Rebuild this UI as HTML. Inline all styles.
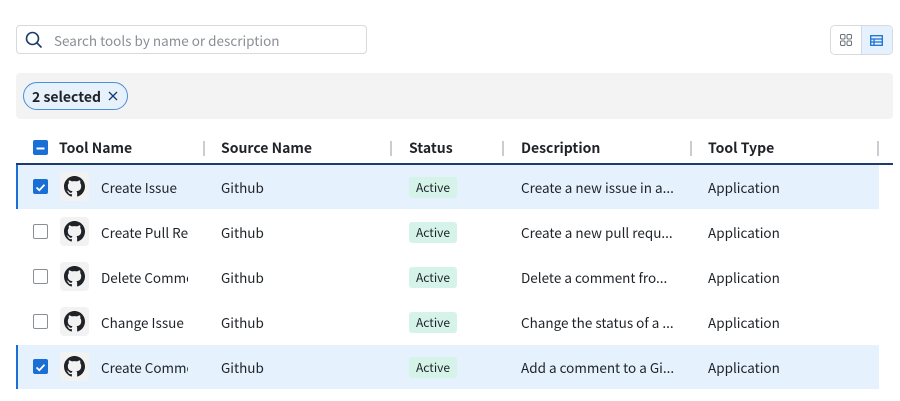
<!DOCTYPE html>
<html><head><meta charset="utf-8"><style>
*{box-sizing:border-box;margin:0;padding:0}
body{width:900px;height:401px;background:#fff;font-family:"Noto Sans CJK JP","Liberation Sans",sans-serif;color:#1f2328;position:relative;overflow:hidden;font-size:13.5px}
.abs{position:absolute}
.search{left:16px;top:25px;width:351px;height:29px;border:1px solid #d6d9dd;border-radius:4px}
.search span{position:absolute;left:37px;top:4px;color:#8a8f96;font-size:13.5px}
.toggle{left:830px;top:25px;width:63px;height:30px;border:1px solid #d6d9dd;border-radius:5px;overflow:hidden;display:flex}
.toggle div{width:31px;height:100%;display:flex;align-items:center;justify-content:center}
.bar{left:16px;top:73px;width:877px;height:46px;background:#f3f3f3;border-radius:4px}
.chip{left:23px;top:82px;width:105px;height:28px;border:1px solid #4a90d9;border-radius:14px;background:#e6f1fc;font-weight:600;font-size:14px;padding:4px 0 0 8px;color:#1f2328}
.th{top:138px;font-weight:600;font-size:14px}
.sep{top:141px;width:2px;height:15px;background:#c9ccd0}
.hline{left:16px;top:163px;width:877px;height:2px;background:#1d3c6b}
.row{left:16px;width:863px;height:44px}
.sel{background:#e5f1fd;border-left:2px solid #1a6fd6}
.cb{width:15px;height:15px;border-radius:2px}
.cb.off{border:1.5px solid #8a8f96;background:#fff}
.cb.on{background:#1a6fd6}
.ic{width:29px;height:29px;background:#f2f2f2;border-radius:4px;display:flex;align-items:center;justify-content:center}
.txt{font-size:13.5px;white-space:nowrap;overflow:hidden}
.badge{width:48px;height:21px;background:#d5f3e8;border-radius:3px;font-size:12px;text-align:center;line-height:21px;color:#1f2328}
</style></head><body>
<div class="abs search">
<svg class="abs" style="left:8px;top:5px" width="18" height="18" viewBox="0 0 18 18"><circle cx="7.5" cy="7.5" r="6" fill="none" stroke="#1d3c6b" stroke-width="1.6"/><line x1="12" y1="12" x2="16.5" y2="16.5" stroke="#1d3c6b" stroke-width="1.6"/></svg>
<span>Search tools by name or description</span></div>
<div class="abs toggle"><div style="background:#fff;border-right:1px solid #d6d9dd"><svg width="12" height="12" viewBox="0 0 12 12" fill="none" stroke="#6b7075" stroke-width="1"><rect x="0.5" y="0.5" width="4.5" height="4.5" rx="1.2"/><rect x="7" y="0.5" width="4.5" height="4.5" rx="1.2"/><rect x="0.5" y="7" width="4.5" height="4.5" rx="1.2"/><rect x="7" y="7" width="4.5" height="4.5" rx="1.2"/></svg></div><div style="background:#e5f1fd"><svg width="13" height="11" viewBox="0 0 13 11" fill="none" stroke="#1a6fd6" stroke-width="1.3"><rect x="0.7" y="0.7" width="11.6" height="9.6"/><line x1="0.7" y1="4" x2="12.3" y2="4"/><line x1="0.7" y1="7" x2="12.3" y2="7"/><line x1="4" y1="4" x2="4" y2="10.3"/></svg></div></div>
<div class="abs bar"></div>
<div class="abs chip">2 selected <svg style="position:absolute;left:84px;top:8px" width="10" height="10" viewBox="0 0 10 10" stroke="#1d3c6b" stroke-width="1.3"><line x1="1" y1="1" x2="9" y2="9"/><line x1="9" y1="1" x2="1" y2="9"/></svg></div>
<div class="abs cb on" style="left:33px;top:140px"><svg width="15" height="15"><line x1="3.5" y1="7.5" x2="11.5" y2="7.5" stroke="#fff" stroke-width="2"/></svg></div>
<div class="abs th" style="left:59px">Tool Name</div>
<div class="abs sep" style="left:203px"></div>
<div class="abs th" style="left:221px">Source Name</div>
<div class="abs sep" style="left:390px"></div>
<div class="abs th" style="left:409px">Status</div>
<div class="abs sep" style="left:502px"></div>
<div class="abs th" style="left:521px">Description</div>
<div class="abs sep" style="left:690px"></div>
<div class="abs th" style="left:708px">Tool Type</div>
<div class="abs sep" style="left:877px"></div>
<div class="abs hline"></div>
<div class="abs row sel" style="top:165px"></div>
<div class="abs row sel" style="top:345px"></div>
<div id="rows"></div>
<script>
var gh='<svg width="21" height="21" viewBox="0 0 16 16"><path fill="#1f2328" d="M8 0C3.58 0 0 3.58 0 8c0 3.54 2.29 6.53 5.47 7.59.4.07.55-.17.55-.38 0-.19-.01-.82-.01-1.49-2.01.37-2.53-.49-2.69-.94-.09-.23-.48-.94-.82-1.13-.28-.15-.68-.52-.01-.53.63-.01 1.08.58 1.23.82.72 1.21 1.87.87 2.33.66.07-.52.28-.87.51-1.07-1.78-.2-3.64-.89-3.64-3.95 0-.87.31-1.59.82-2.15-.08-.2-.36-1.02.08-2.12 0 0 .67-.21 2.2.82.64-.18 1.32-.27 2-.27.68 0 1.36.09 2 .27 1.53-1.04 2.2-.82 2.2-.82.44 1.1.16 1.92.08 2.12.51.56.82 1.27.82 2.15 0 3.07-1.87 3.75-3.65 3.95.29.25.54.73.54 1.48 0 1.07-.01 1.93-.01 2.2 0 .21.15.46.55.38A8.013 8.013 0 0 0 16 8c0-4.42-3.58-8-8-8z"/></svg>';
var d=[["Create Issue","Create a new issue in a...",1],["Create Pull Request","Create a new pull requ...",0],["Delete Comment","Delete a comment fro...",0],["Change Issue","Change the status of a ...",0],["Create Comment","Add a comment to a Gi...",1]];
var h='';
d.forEach(function(r,i){var c=187+45*i;
h+='<div class="abs cb '+(r[2]?'on':'off')+'" style="left:33px;top:'+(c-8)+'px">'+(r[2]?'<svg width="15" height="15"><polyline points="3.5,7.5 6.3,10.2 11.5,4.8" fill="none" stroke="#fff" stroke-width="1.8"/></svg>':'')+'</div>';
h+='<div class="abs ic" style="left:60px;top:'+(c-15)+'px">'+gh+'</div>';
h+='<div class="abs txt" style="left:101px;width:87px;top:'+(c-10)+'px">'+r[0]+'</div>';
h+='<div class="abs txt" style="left:221px;top:'+(c-10)+'px">Github</div>';
h+='<div class="abs badge" style="left:409px;top:'+(c-10)+'px">Active</div>';
h+='<div class="abs txt" style="left:521px;top:'+(c-10)+'px">'+r[1]+'</div>';
h+='<div class="abs txt" style="left:708px;top:'+(c-10)+'px">Application</div>';});
document.getElementById('rows').innerHTML=h;
</script>
</body></html>
